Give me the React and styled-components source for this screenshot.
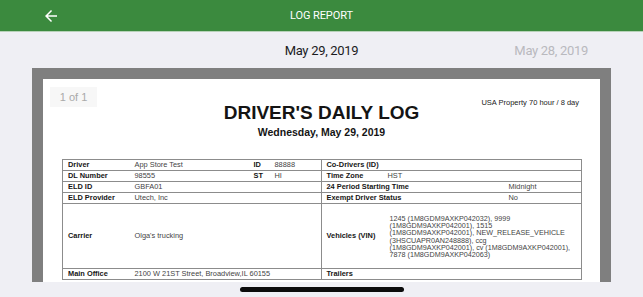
import styled, { createGlobalStyle } from 'styled-components'

const GlobalStyle = createGlobalStyle`
    body {
        margin: 0;
        background: #efeff4;
        font-family: Roboto, "Liberation Sans", sans-serif;
    }
`

const Screen = styled.div`
    width: 643px;
    height: 297px;
    overflow: hidden;
    display: flex;
    flex-direction: column;
`
const TopBar = styled.header`
    flex: none;
    height: 31px;
    display: grid;
    grid-template-columns: 1fr auto 1fr;
    align-items: center;
    background: #3b8a3e;
    border-bottom: 1px solid #b7d2b8;
    color: white;
`
const BackButton = styled.button`
    justify-self: start;
    margin-left: 42px;
    width: 18px;
    height: 18px;
    padding: 0;
    border: none;
    background: none;
    color: white;
    display: flex;
`
const BarTitle = styled.div`
    font-size: 11px;
    letter-spacing: -0.1px;
`
const DateBar = styled.div`
    flex: none;
    height: 36px;
    display: grid;
    grid-template-columns: 1fr auto 1fr;
    align-items: center;
`
const DateLabel = styled.div`
    font-size: 13px;
    letter-spacing: -0.3px;
    color: ${p => (p.$current ? '#1b1b1d' : '#b9b9be')};
    padding-left: ${p => (p.$current ? 0 : 156)}px;
`
const Viewer = styled.div`
    flex: none;
    height: 214px;
    margin: 0 32px;
    padding: 11px 11px 0;
    box-sizing: border-box;
    background: #7f7f7f;
    overflow: hidden;
`
const Paper = styled.div`
    position: relative;
    background: white;
    padding: 19px 19px 0;
    min-height: 100%;
    box-sizing: border-box;
    font-family: "Liberation Sans", Arial, sans-serif;
    color: #141414;
`
const PageBadge = styled.div`
    position: absolute;
    top: 8px;
    left: 7px;
    width: 47px;
    height: 20px;
    display: flex;
    align-items: center;
    justify-content: center;
    background: #f7f7f7;
    color: #a9a9a9;
    font-size: 11px;
`
const ReportHead = styled.div`
    display: grid;
    grid-template-columns: 1fr auto 1fr;
    align-items: start;
`
const TitleBlock = styled.div`
    grid-column: 2;
    text-align: center;
`
const ReportTitle = styled.h1`
    margin: 5px 0 0;
    font-size: 19px;
    line-height: 19px;
    font-weight: bold;
`
const ReportDate = styled.h2`
    margin: 4px 0 0;
    font-size: 10.5px;
    line-height: 12px;
    font-weight: bold;
`
const RuleNote = styled.div`
    grid-column: 3;
    justify-self: end;
    padding-right: 2px;
    font-size: 7.5px;
    line-height: 10px;
    color: #222;
`
const LogTable = styled.table`
    margin-top: 21px;
    width: 100%;
    table-layout: fixed;
    border-collapse: collapse;
    border: 1px solid #8c8c8c;
    font-size: 7.4px;
    color: #444;
`
const Col = styled.col`
    width: ${p => p.$w}px;
`
const Cell = styled.td`
    height: 10px;
    padding: 0 5px;
    line-height: 10px;
    white-space: nowrap;
    overflow: hidden;
    border-top: 1px solid #8c8c8c;
    border-bottom: 1px solid #8c8c8c;
    border-left: ${p => (p.$divider ? '1px solid #8c8c8c' : 'none')};
    font-weight: ${p => (p.$label ? 'bold' : 'normal')};
    color: ${p => (p.$label ? '#161616' : '#444')};
`
const VinCell = styled(Cell)`
    height: auto;
    padding: 11px 5px 10px 7px;
    font-size: 7.2px;
    line-height: 7.2px;
    white-space: normal;
`
const HomeArea = styled.div`
    flex: 1;
    display: flex;
    justify-content: center;
    padding-top: 5px;
`
const HomeIndicator = styled.div`
    width: 164px;
    height: 5px;
    border-radius: 3px;
    background: #0b0b0b;
`

const columns = [67, 119, 21, 51.5, 61.5, 121, 78]

const vehicles = [
    '1245 (1M8GDM9AXKP042032), 9999',
    '(1M8GDM9AXKP042001), 1515',
    '(1M8GDM9AXKP042001), NEW_RELEASE_VEHICLE',
    '(3HSCUAPR0AN248888), ccg',
    '(1M8GDM9AXKP042001), cv (1M8GDM9AXKP042001),',
    '7878 (1M8GDM9AXKP042063)',
]

const ArrowBack = () => (
    <svg width="18" height="18" viewBox="0 0 24 24" fill="currentColor">
        <path d="M20 11H7.83l5.59-5.59L12 4l-8 8 8 8 1.41-1.41L7.83 13H20v-2z" />
    </svg>
)

const App = () => {
    return (
        <Screen>
            <GlobalStyle />
            <TopBar>
                <BackButton aria-label="back"><ArrowBack /></BackButton>
                <BarTitle>LOG REPORT</BarTitle>
                <div />
            </TopBar>
            <DateBar>
                <div />
                <DateLabel $current>May 29, 2019</DateLabel>
                <DateLabel>May 28, 2019</DateLabel>
            </DateBar>
            <Viewer>
                <Paper>
                    <PageBadge>1 of 1</PageBadge>
                    <ReportHead>
                        <TitleBlock>
                            <ReportTitle>DRIVER'S DAILY LOG</ReportTitle>
                            <ReportDate>Wednesday, May 29, 2019</ReportDate>
                        </TitleBlock>
                        <RuleNote>USA Property 70 hour / 8 day</RuleNote>
                    </ReportHead>
                    <LogTable>
                        <colgroup>
                            {columns.map((w, i) => <Col key={i} $w={w} />)}
                        </colgroup>
                        <tbody>
                            <tr>
                                <Cell $label>Driver</Cell>
                                <Cell>App Store Test</Cell>
                                <Cell $label>ID</Cell>
                                <Cell>88888</Cell>
                                <Cell $label $divider colSpan={3}>Co-Drivers (ID)</Cell>
                            </tr>
                            <tr>
                                <Cell $label>DL Number</Cell>
                                <Cell>98555</Cell>
                                <Cell $label>ST</Cell>
                                <Cell>HI</Cell>
                                <Cell $label $divider>Time Zone</Cell>
                                <Cell colSpan={2}>HST</Cell>
                            </tr>
                            <tr>
                                <Cell $label>ELD ID</Cell>
                                <Cell colSpan={3}>GBFA01</Cell>
                                <Cell $label $divider colSpan={2}>24 Period Starting Time</Cell>
                                <Cell>Midnight</Cell>
                            </tr>
                            <tr>
                                <Cell $label>ELD Provider</Cell>
                                <Cell colSpan={3}>Utech, Inc</Cell>
                                <Cell $label $divider colSpan={2}>Exempt Driver Status</Cell>
                                <Cell>No</Cell>
                            </tr>
                            <tr>
                                <Cell $label>Carrier</Cell>
                                <Cell colSpan={3}>Olga's trucking</Cell>
                                <Cell $label $divider>Vehicles (VIN)</Cell>
                                <VinCell colSpan={2}>
                                    {vehicles.map((line, i) => (
                                        <span key={i}>{line}<br /></span>
                                    ))}
                                </VinCell>
                            </tr>
                            <tr>
                                <Cell $label>Main Office</Cell>
                                <Cell colSpan={3}>2100 W 21ST Street, Broadview,IL 60155</Cell>
                                <Cell $label $divider colSpan={3}>Trailers</Cell>
                            </tr>
                        </tbody>
                    </LogTable>
                </Paper>
            </Viewer>
            <HomeArea>
                <HomeIndicator />
            </HomeArea>
        </Screen>
    )
}

export default App
